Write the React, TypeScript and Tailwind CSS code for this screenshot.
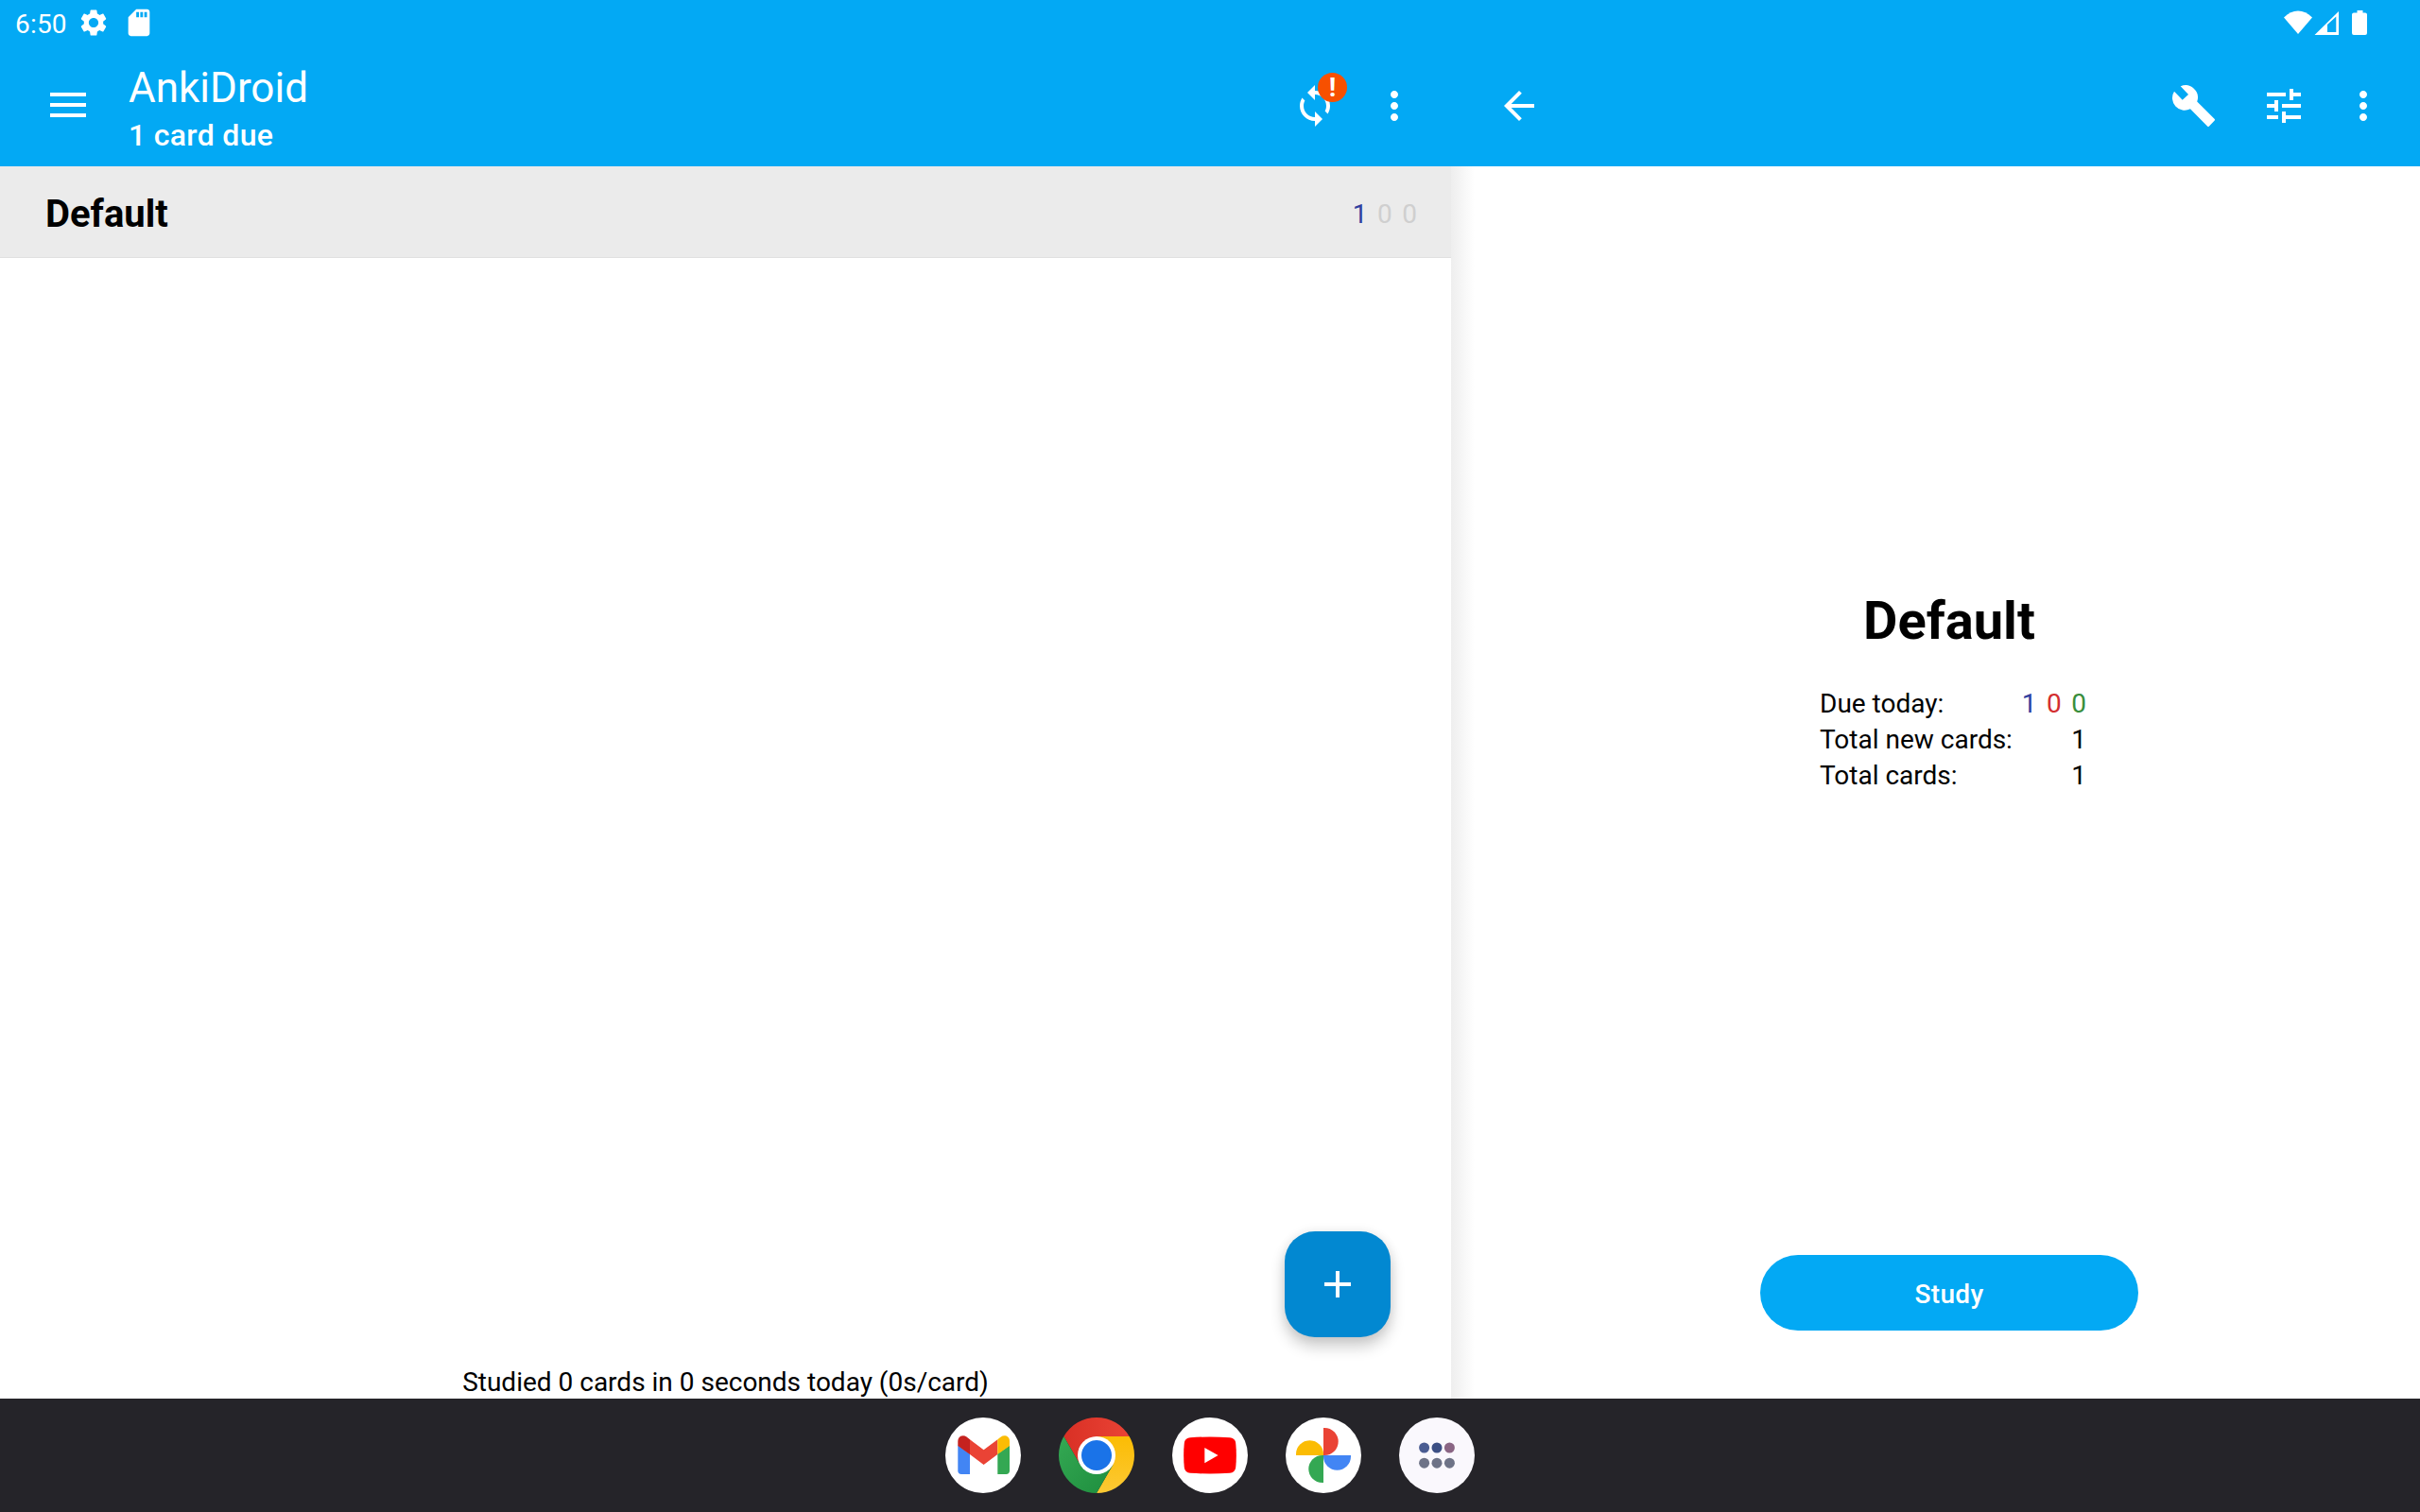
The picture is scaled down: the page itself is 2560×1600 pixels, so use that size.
import React from "react";

type IconProps = { d: string; className?: string };

function Icon({ d, className = "size-12" }: IconProps) {
  return (
    <svg viewBox="0 0 24 24" fill="currentColor" className={`${className} shrink-0`}>
      <path d={d} />
    </svg>
  );
}

const PATHS = {
  settings:
    "M19.14 12.94c.04-.3.06-.61.06-.94 0-.32-.02-.64-.07-.94l2.03-1.58c.18-.14.23-.41.12-.61l-1.92-3.32c-.12-.22-.37-.29-.59-.22l-2.39.96c-.5-.38-1.03-.7-1.62-.94l-.36-2.54c-.04-.24-.24-.41-.48-.41h-3.84c-.24 0-.43.17-.47.41l-.36 2.54c-.59.24-1.13.57-1.62.94l-2.39-.96c-.22-.08-.47 0-.59.22L2.74 8.87c-.12.21-.08.47.12.61l2.03 1.58c-.05.3-.09.63-.09.94s.02.64.07.94l-2.03 1.58c-.18.14-.23.41-.12.61l1.92 3.32c.12.22.37.29.59.22l2.39-.96c.5.38 1.03.7 1.62.94l.36 2.54c.05.24.24.41.48.41h3.84c.24 0 .44-.17.47-.41l.36-2.54c.59-.24 1.13-.56 1.62-.94l2.39.96c.22.08.47 0 .59-.22l1.92-3.32c.12-.22.07-.47-.12-.61l-2.01-1.58zM12 15.6c-1.98 0-3.6-1.62-3.6-3.6s1.62-3.6 3.6-3.6 3.6 1.62 3.6 3.6-1.62 3.6-3.6 3.6z",
  sdCard:
    "M18 2h-8L4.02 8 4 20c0 1.1.9 2 2 2h12c1.1 0 2-.9 2-2V4c0-1.1-.9-2-2-2zm-6 6h-2V4h2v4zm3 0h-2V4h2v4zm3 0h-2V4h2v4z",
  sync: "M12 4V1L8 5l4 4V6c3.31 0 6 2.69 6 6 0 1.01-.25 1.97-.7 2.8l1.46 1.46C19.54 15.03 20 13.57 20 12c0-4.42-3.58-8-8-8zm0 14c-3.31 0-6-2.69-6-6 0-1.01.25-1.97.7-2.8L5.24 7.74C4.46 8.97 4 10.43 4 12c0 4.42 3.58 8 8 8v3l4-4-4-4v3z",
  more: "M12 8c1.1 0 2-.9 2-2s-.9-2-2-2-2 .9-2 2 .9 2 2 2zm0 2c-1.1 0-2 .9-2 2s.9 2 2 2 2-.9 2-2-.9-2-2-2zm0 6c-1.1 0-2 .9-2 2s.9 2 2 2 2-.9 2-2-.9-2-2-2z",
  back: "M20 11H7.83l5.59-5.59L12 4l-8 8 8 8 1.41-1.41L7.83 13H20v-2z",
  tune: "M3 17v2h6v-2H3zM3 5v2h10V5H3zm10 16v-2h8v-2h-8v-2h-2v6h2zM7 9v2H3v2h4v2h2V9H7zm14 4v-2H11v2h10zm-6-4h2V7h4V5h-4V3h-2v6z",
  add: "M19 13h-6v6h-2v-6H5v-2h6V5h2v6h6v2z",
};

function StatusBar() {
  return (
    <header className="flex h-12 shrink-0 items-center bg-[#03a9f4] pl-4 text-white">
      <span className="w-[66px] pt-[3px] text-[28px] leading-none tracking-[0.2px]">6:50</span>
      <Icon d={PATHS.settings} className="size-[34px]" />
      <Icon d={PATHS.sdCard} className="ml-[14px] size-[34px]" />
      <svg viewBox="0 0 90 28" className="mr-[54px] ml-auto h-7 w-[90px]" fill="currentColor">
        <path d="M0 8.5 C9 -.8 21 -.8 30 8.5 L15 26z" />
        <path fillRule="evenodd" d="M32.5 27 L58 2 V27z M46 16 V24 H55.300 V7.500z" />
        <path d="M77.500 1h6v2.500h2.500a2 2 0 0 1 2 2V25a2 2 0 0 1-2 2H74a2 2 0 0 1-2-2V5.500a2 2 0 0 1 2-2h3.500z" />
      </svg>
    </header>
  );
}

function DeckListPane() {
  return (
    <section className="flex w-[1535px] shrink-0 flex-col">
      <div className="flex h-32 shrink-0 items-center bg-[#03a9f4] pr-9 text-white">
        <svg viewBox="0 0 38 26" className="mt-[-2px] ml-[53px] h-[26px] w-[38px]" fill="currentColor">
          <path d="M0 0h38v4H0zM0 11h38v4H0zM0 22h38v4H0z" />
        </svg>
        <div className="ml-[45px] flex flex-col pt-[10px]">
          <h1 className="text-[44px] leading-[52px]">AnkiDroid</h1>
          <p className="text-[32px] leading-[48px] font-medium tracking-[0.32px]">1 card due</p>
        </div>
        <div className="relative mr-9 ml-auto">
          <Icon d={PATHS.sync} />
          <span className="absolute top-[-11px] left-[27px] flex size-[31px] items-center justify-center rounded-full bg-[#f75000] text-[28px] leading-none font-bold">
            !
          </span>
        </div>
        <Icon d={PATHS.more} />
      </div>
      <div className="flex h-[97px] shrink-0 items-center border-b border-[#e0e0e0] bg-[#ebebeb] pt-[5px] pr-9 pl-12">
        <h2 className="text-[40px] leading-none font-bold">Default</h2>
        <div className="ml-auto flex gap-[10.5px] text-[28px] text-[#cfcfcf]">
          <span className="text-[#303f9f]">1</span>
          <span>0</span>
          <span>0</span>
        </div>
      </div>
      <div className="flex flex-1 flex-col justify-end">
        <button className="mr-16 flex size-28 items-center justify-center self-end rounded-[32px] bg-[#0288d1] text-white shadow-[0_10px_16px_rgba(0,0,0,0.2),0_0_12px_rgba(0,0,0,0.08)]">
          <Icon d={PATHS.add} />
        </button>
        <p className="mt-[30px] h-[35px] text-center text-[28px] leading-[35px]">
          Studied 0 cards in 0 seconds today (0s/card)
        </p>
      </div>
    </section>
  );
}

function StatRow({ label, children }: { label: string; children: React.ReactNode }) {
  return (
    <div className="flex justify-between leading-[38px]">
      <dt>{label}</dt>
      <dd className="flex gap-[10.5px]">{children}</dd>
    </div>
  );
}

function DeckDetailPane() {
  return (
    <section className="flex flex-1 flex-col">
      <div className="flex h-32 shrink-0 items-center bg-[#03a9f4] pr-9 pl-12 text-white">
        <Icon d={PATHS.back} />
        <svg viewBox="0 0 48 48" className="mr-[-1px] ml-auto size-12" fill="currentColor">
          <path d="M3 8.700L11.700 17.800L18 12L9.700 3.300A13 13 0 0 1 27.200 19.500L45.500 37.800Q46.500 38.800 45.500 39.800L40 45.500Q39 46.500 38 45.500L20 27.200A13 13 0 0 1 3 8.700z" />
        </svg>
        <Icon d={PATHS.tune} className="ml-12 size-12" />
        <Icon d={PATHS.more} className="ml-9 size-12" />
      </div>
      <div className="flex flex-1">
        <div className="w-[29px] bg-linear-to-r from-[#eeeeee] to-white to-[25px]" />
        <div className="flex flex-1 flex-col items-center">
          <h2 className="mt-[448px] text-[56px] leading-[66px] font-bold">Default</h2>
          <dl className="mt-[36px] ml-[8px] w-[282px] text-[28px]">
            <StatRow label="Due today:">
              <span className="text-[#303f9f]">1</span>
              <span className="text-[#d32f2f]">0</span>
              <span className="text-[#388e3c]">0</span>
            </StatRow>
            <StatRow label="Total new cards:">1</StatRow>
            <StatRow label="Total cards:">1</StatRow>
          </dl>
          <button className="mt-auto mb-[72px] h-20 w-[400px] rounded-full bg-[#03a9f4] pt-[3px] text-[28px] font-medium tracking-[0.3px] text-white">
            Study
          </button>
        </div>
      </div>
    </section>
  );
}

function Gmail() {
  return (
    <svg viewBox="0 0 80 80" className="size-20">
      <circle cx="40" cy="40" r="40" fill="#fff" />
      <path fill="#4285f4" d="M13.300 29.500L26 38.500V60H17a3.700 3.700 0 0 1-3.700-3.700z" />
      <path fill="#34a853" d="M68 29.500L55.300 38.500V60H64.300a3.700 3.700 0 0 0 3.700-3.700z" />
      <path fill="#ea4335" d="M26 23.300L40.600 34.300L55.300 23.300V39L40.600 50L26 39z" />
      <path fill="#c5221f" d="M13.300 25C13.300 19.500 19 17.800 22.500 20.500L26 23.300V39L13.300 30z" />
      <path fill="#fbbc04" d="M68 25C68 19.500 62.300 17.800 58.800 20.500L55.300 23.300V39L68 30z" />
    </svg>
  );
}

function Chrome() {
  return (
    <svg viewBox="0 0 80 80" className="size-20">
      <defs>
        <linearGradient id="chromeRed" x1="0" x2="1">
          <stop offset="0" stopColor="#d93025" />
          <stop offset="1" stopColor="#ea4335" />
        </linearGradient>
        <linearGradient id="chromeYellow" x1="0" y1="1" x2="0" y2="0">
          <stop offset="0" stopColor="#fcc934" />
          <stop offset="1" stopColor="#fbbc04" />
        </linearGradient>
        <linearGradient id="chromeGreen" x1="1" y1="1" x2="0" y2="0">
          <stop offset="0" stopColor="#1e8e3e" />
          <stop offset="1" stopColor="#34a853" />
        </linearGradient>
      </defs>
      <path fill="url(#chromeRed)" d="M5.360 20A40 40 0 0 1 74.640 20H40L22.700 50z" />
      <path fill="url(#chromeYellow)" d="M74.640 20A40 40 0 0 1 40 80L57.300 50L40 20z" />
      <path fill="url(#chromeGreen)" d="M40 80A40 40 0 0 1 5.360 20L22.700 50H57.300z" />
      <circle cx="40" cy="40" r="20" fill="#fff" />
      <circle cx="40" cy="40" r="16" fill="#1a73e8" />
    </svg>
  );
}

function YouTube() {
  return (
    <svg viewBox="0 0 80 80" className="size-20">
      <circle cx="40" cy="40" r="40" fill="#fff" />
      <path
        fill="#f00"
        d="M19 21.200Q40 19.800 61 21.200Q66.500 21.700 67.200 27Q68.500 40 67.200 53Q66.500 58.300 61 58.800Q40 60.200 19 58.800Q13.500 58.300 12.800 53Q11.500 40 12.800 27Q13.500 21.700 19 21.200z"
      />
      <path fill="#fff" d="M34.300 32L48.600 40L34.300 48.200z" />
    </svg>
  );
}

function Photos() {
  return (
    <svg viewBox="0 0 80 80" className="size-20">
      <circle cx="40" cy="40" r="40" fill="#fff" />
      <path fill="#ea4335" d="M40 11H41.200A14.500 14.500 0 0 1 41.200 40H40z" />
      <path fill="#4285f4" d="M69 40V41.200A14.500 14.500 0 0 1 40 41.200V40z" />
      <path fill="#34a853" d="M40 69H38.800A14.500 14.500 0 0 1 38.800 40H40z" />
      <path fill="#fbbc04" d="M11 40V38.800A14.500 14.500 0 0 1 40 38.800V40z" />
    </svg>
  );
}

function AllApps() {
  return (
    <svg viewBox="0 0 80 80" className="size-20">
      <circle cx="40" cy="40" r="40" fill="#faf8fd" />
      <circle cx="26.600" cy="32" r="5.500" fill="#4a5c92" />
      <circle cx="40" cy="32" r="5.500" fill="#3c4f84" />
      <circle cx="53.400" cy="32" r="5.500" fill="#8a6584" />
      <circle cx="26.600" cy="48.200" r="5.500" fill="#6e7387" />
      <circle cx="40" cy="48.200" r="5.500" fill="#6e7387" />
      <circle cx="53.400" cy="48.200" r="5.500" fill="#6e7387" />
    </svg>
  );
}

export default function App() {
  return (
    <div className="flex h-[1600px] w-[2560px] flex-col overflow-hidden bg-white font-[Roboto,sans-serif] text-black">
      <StatusBar />
      <main className="flex flex-1">
        <DeckListPane />
        <DeckDetailPane />
      </main>
      <nav className="flex h-[120px] shrink-0 items-center justify-center gap-10 bg-[#252429]">
        <Gmail />
        <Chrome />
        <YouTube />
        <Photos />
        <AllApps />
      </nav>
    </div>
  );
}
